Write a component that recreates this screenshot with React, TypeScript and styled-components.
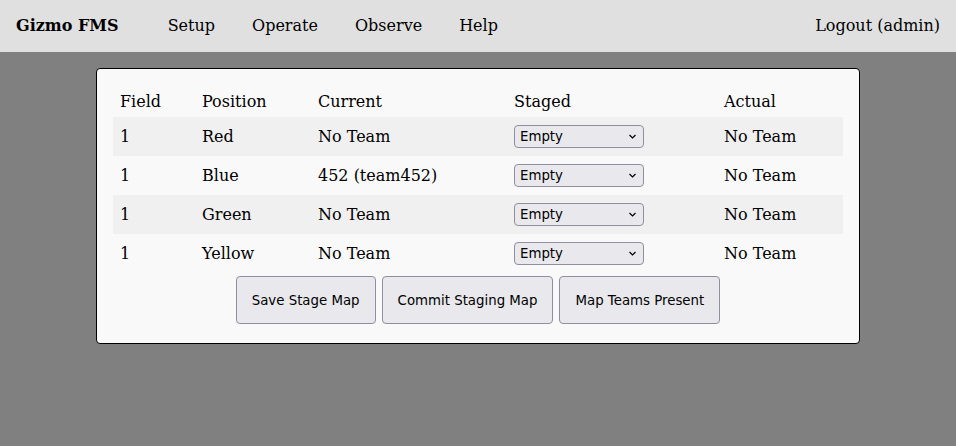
import React from "react";
import styled, { createGlobalStyle } from "styled-components";

const Global = createGlobalStyle`
  html, body {
    margin: 0;
    padding: 0;
    background: #808080;
    font-family: "DejaVu Serif", serif;
    font-size: 16px;
    color: #000;
  }
`;

const NavBar = styled.div`
  display: flex;
  align-items: center;
  height: 52px;
  padding: 0 16px 2px;
  background: #e0e0e0;
  box-sizing: border-box;
`;

const Brand = styled.div`
  font-weight: bold;
  margin-right: 49px;
`;

const NavLinks = styled.div`
  display: flex;
  gap: 37px;
  flex: 1;
`;

const NavLink = styled.span`
  cursor: pointer;
`;

const Panel = styled.div`
  width: 764px;
  margin: 16px auto 0;
  box-sizing: border-box;
  background: #f9f9f9;
  border: 1px solid #000;
  border-radius: 4px;
  padding: 16px 16px 19px;
`;

const Table = styled.table`
  width: 100%;
  border-collapse: collapse;
  table-layout: fixed;
`;

const Th = styled.th<{ $w: number }>`
  width: ${(p) => p.$w}px;
  text-align: left;
  font-weight: normal;
  padding: 0 7px;
  height: 32px;
  vertical-align: middle;
`;

const Tr = styled.tr<{ $striped: boolean }>`
  background: ${(p) => (p.$striped ? "#f0f0f0" : "transparent")};
`;

const Td = styled.td`
  padding: 0 7px;
  height: 39px;
  vertical-align: middle;
`;

const SelectBox = styled.div`
  display: flex;
  align-items: center;
  justify-content: space-between;
  width: 130px;
  height: 23px;
  box-sizing: border-box;
  padding: 0 6px 0 5px;
  background: #e9e9ed;
  border: 1px solid #8f8f9d;
  border-radius: 4px;
  font-family: "DejaVu Sans", sans-serif;
  font-size: 13.33px;
`;

const Buttons = styled.div`
  display: flex;
  justify-content: center;
  gap: 6px;
  margin-top: 3px;
`;

const Button = styled.button`
  height: 48px;
  padding: 0 15px;
  background: #e9e9ed;
  border: 1px solid #8f8f9d;
  border-radius: 4px;
  font-family: "DejaVu Sans", sans-serif;
  font-size: 13.33px;
  color: #000;
`;

const Chevron = () => (
  <svg width="9" height="9" viewBox="0 0 9 9">
    <path d="M1.5 3 L4.5 6 L7.5 3" fill="none" stroke="#000" strokeWidth="1.2" />
  </svg>
);

const rows = [
  { field: "1", pos: "Red", current: "No Team" },
  { field: "1", pos: "Blue", current: "452 (team452)" },
  { field: "1", pos: "Green", current: "No Team" },
  { field: "1", pos: "Yellow", current: "No Team" },
];

export default function App() {
  return (
    <>
      <Global />
      <NavBar>
        <Brand>Gizmo FMS</Brand>
        <NavLinks>
          <NavLink>Setup</NavLink>
          <NavLink>Operate</NavLink>
          <NavLink>Observe</NavLink>
          <NavLink>Help</NavLink>
        </NavLinks>
        <NavLink>Logout (admin)</NavLink>
      </NavBar>
      <Panel>
        <Table>
          <thead>
            <tr>
              <Th $w={68}>Field</Th>
              <Th $w={102}>Position</Th>
              <Th $w={182}>Current</Th>
              <Th $w={196}>Staged</Th>
              <Th $w={112}>Actual</Th>
            </tr>
          </thead>
          <tbody>
            {rows.map((r, i) => (
              <Tr key={i} $striped={i % 2 === 0}>
                <Td>{r.field}</Td>
                <Td>{r.pos}</Td>
                <Td>{r.current}</Td>
                <Td>
                  <SelectBox>
                    <span>Empty</span>
                    <Chevron />
                  </SelectBox>
                </Td>
                <Td>No Team</Td>
              </Tr>
            ))}
          </tbody>
        </Table>
        <Buttons>
          <Button>Save Stage Map</Button>
          <Button>Commit Staging Map</Button>
          <Button>Map Teams Present</Button>
        </Buttons>
      </Panel>
    </>
  );
}
